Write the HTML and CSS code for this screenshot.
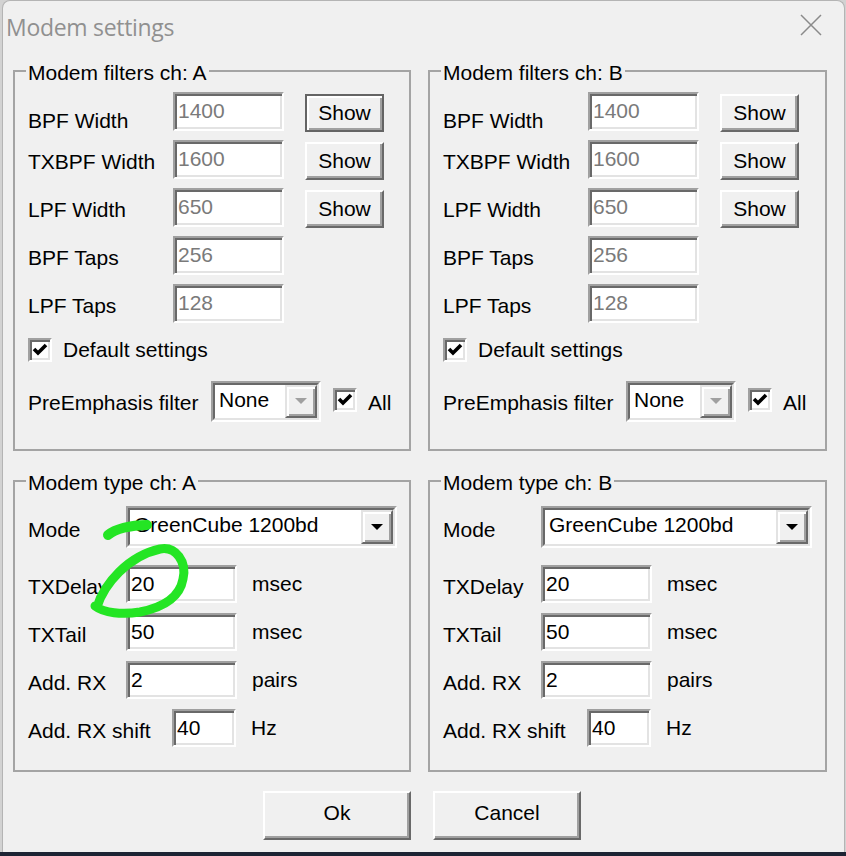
FILE: index.html
```html
<!DOCTYPE html>
<html>
<head>
<meta charset="utf-8">
<title>Modem settings</title>
<link rel="stylesheet" href="styles.css">
</head>
<body>
<div class="window">
  <div class="titlebar">
    <span class="title">Modem settings</span>
    <svg class="close" width="22" height="22" viewBox="0 0 22 22"><path d="M1 1 L21 21 M21 1 L1 21" stroke="#8a8a8a" stroke-width="1.5" fill="none"/></svg>
  </div>

  <div class="groups">
    <fieldset class="group filters">
      <legend>Modem filters ch: A</legend>
      <div class="frow"><span class="lbl w145 first">BPF Width</span><span class="edit w111 dis">1400</span><span class="btn show default">Show</span></div>
      <div class="frow"><span class="lbl w145">TXBPF Width</span><span class="edit w111 dis">1600</span><span class="btn show">Show</span></div>
      <div class="frow"><span class="lbl w145">LPF Width</span><span class="edit w111 dis">650</span><span class="btn show">Show</span></div>
      <div class="frow"><span class="lbl w145">BPF Taps</span><span class="edit w111 dis">256</span></div>
      <div class="frow"><span class="lbl w145">LPF Taps</span><span class="edit w111 dis">128</span></div>
      <div class="chkrow"><span class="chk"><svg width="20" height="20" viewBox="0 0 20 20"><polyline points="4,9 8,13 16,5" fill="none" stroke="#000" stroke-width="3.6"/></svg></span><span class="chktext">Default settings</span></div>
      <div class="prerow">
        <span class="lbl w183 pre">PreEmphasis filter</span>
        <span class="combo small"><span class="combo-in"><span class="combo-text">None</span><span class="drop"><svg width="12" height="7" viewBox="0 0 12 7"><polygon points="0,0 12,0 6,6" fill="#a0a0a0"/></svg></span></span></span>
        <span class="chk allchk"><svg width="20" height="20" viewBox="0 0 20 20"><polyline points="4,9 8,13 16,5" fill="none" stroke="#000" stroke-width="3.6"/></svg></span>
        <span class="alltext">All</span>
      </div>
    </fieldset>

    <fieldset class="group filters">
      <legend>Modem filters ch: B</legend>
      <div class="frow"><span class="lbl w145 first">BPF Width</span><span class="edit w111 dis">1400</span><span class="btn show">Show</span></div>
      <div class="frow"><span class="lbl w145">TXBPF Width</span><span class="edit w111 dis">1600</span><span class="btn show">Show</span></div>
      <div class="frow"><span class="lbl w145">LPF Width</span><span class="edit w111 dis">650</span><span class="btn show">Show</span></div>
      <div class="frow"><span class="lbl w145">BPF Taps</span><span class="edit w111 dis">256</span></div>
      <div class="frow"><span class="lbl w145">LPF Taps</span><span class="edit w111 dis">128</span></div>
      <div class="chkrow"><span class="chk"><svg width="20" height="20" viewBox="0 0 20 20"><polyline points="4,9 8,13 16,5" fill="none" stroke="#000" stroke-width="3.6"/></svg></span><span class="chktext">Default settings</span></div>
      <div class="prerow">
        <span class="lbl w183 pre">PreEmphasis filter</span>
        <span class="combo small"><span class="combo-in"><span class="combo-text">None</span><span class="drop"><svg width="12" height="7" viewBox="0 0 12 7"><polygon points="0,0 12,0 6,6" fill="#a0a0a0"/></svg></span></span></span>
        <span class="chk allchk"><svg width="20" height="20" viewBox="0 0 20 20"><polyline points="4,9 8,13 16,5" fill="none" stroke="#000" stroke-width="3.6"/></svg></span>
        <span class="alltext">All</span>
      </div>
    </fieldset>

    <fieldset class="group types">
      <legend>Modem type ch: A</legend>
      <div class="moderow">
        <span class="lbl w98 mode">Mode</span>
        <span class="combo wide"><span class="combo-in"><span class="combo-text">GreenCube 1200bd</span><span class="drop"><svg width="12" height="7" viewBox="0 0 12 7"><polygon points="0,0 12,0 6,6" fill="#000"/></svg></span></span></span>
      </div>
      <div class="trow"><span class="lbl w98">TXDelay</span><span class="edit w111">20</span><span class="unit">msec</span></div>
      <div class="trow"><span class="lbl w98">TXTail</span><span class="edit w111">50</span><span class="unit">msec</span></div>
      <div class="trow"><span class="lbl w98">Add. RX</span><span class="edit w111">2</span><span class="unit">pairs</span></div>
      <div class="trow"><span class="lbl w144">Add. RX shift</span><span class="edit w64">40</span><span class="unit">Hz</span></div>
    </fieldset>

    <fieldset class="group types">
      <legend>Modem type ch: B</legend>
      <div class="moderow">
        <span class="lbl w98 mode">Mode</span>
        <span class="combo wide"><span class="combo-in"><span class="combo-text">GreenCube 1200bd</span><span class="drop"><svg width="12" height="7" viewBox="0 0 12 7"><polygon points="0,0 12,0 6,6" fill="#000"/></svg></span></span></span>
      </div>
      <div class="trow"><span class="lbl w98">TXDelay</span><span class="edit w111">20</span><span class="unit">msec</span></div>
      <div class="trow"><span class="lbl w98">TXTail</span><span class="edit w111">50</span><span class="unit">msec</span></div>
      <div class="trow"><span class="lbl w98">Add. RX</span><span class="edit w111">2</span><span class="unit">pairs</span></div>
      <div class="trow"><span class="lbl w144">Add. RX shift</span><span class="edit w64">40</span><span class="unit">Hz</span></div>
    </fieldset>
  </div>

  <div class="buttons">
    <span class="btn pbtn">Ok</span>
    <span class="btn pbtn">Cancel</span>
  </div>

  <svg class="scribble" width="846" height="856" viewBox="0 0 846 856">
    <path d="M108 535 C 115 529, 130 525, 147 525" fill="none" stroke="#24e524" stroke-width="10" stroke-linecap="round"/>
    <path d="M97 607 C 104 584, 128 556, 160 549 C 176 546, 187 562, 183 579 C 180 596, 165 607, 140 612 C 122 615, 104 613, 95 606" fill="none" stroke="#24e524" stroke-width="9" stroke-linecap="round" stroke-linejoin="round"/>
  </svg>
</div>
</body>
</html>
```

FILE: styles.css
```css
html {
  height: 100%;
  background: linear-gradient(#d2d2d2 0, #d2d2d2 852px, #1d2434 852px);
}

body {
  margin: 0;
  font-family: "Liberation Sans", Arial, sans-serif;
  font-size: 21px;
  line-height: 24px;
  color: #000;
}

.window {
  position: relative;
  box-sizing: border-box;
  width: 843px;
  height: 852px;
  margin-left: 2px;
  background: #f0f0f0;
  border: 1px solid #b4b4b4;
  border-bottom: none;
  border-radius: 8px 8px 0 0;
}

.titlebar {
  box-sizing: border-box;
  height: 56px;
  padding: 11px 22px 0 3px;
  display: flex;
  justify-content: space-between;
  align-items: flex-start;
}

.title {
  font-family: "Open Sans", "Noto Sans", sans-serif;
  font-size: 23px;
  line-height: 30px;
  letter-spacing: -0.3px;
  color: #909090;
}

.close {
  display: block;
  margin-top: 2px;
}

.groups {
  display: grid;
  grid-template-columns: 398px 399px;
  column-gap: 17px;
  row-gap: 16px;
  padding-left: 10px;
}

.group {
  margin: 0;
  min-width: 0;
  border: 2px solid #a4a4a4;
  padding: 7px 0 27px 13px;
}

.group.types {
  padding-bottom: 23px;
}

.group legend {
  padding: 4px 2px 0;
  margin-left: -2px;
  line-height: 24px;
  background: #f0f0f0;
}

.lbl {
  display: block;
  flex: none;
  padding-top: 10px;
  white-space: nowrap;
}

.lbl.first { padding-top: 17px; }
.lbl.pre { padding-top: 10px; }
.lbl.mode { padding-top: 12px; }

.w145 { width: 145px; }
.w183 { width: 183px; }
.w98 { width: 98px; }
.w144 { width: 144px; }

.frow {
  display: flex;
  align-items: flex-start;
  height: 39px;
  margin-bottom: 9px;
}

.frow:nth-of-type(5) { margin-bottom: 0; }

.edit {
  display: block;
  flex: none;
  box-sizing: border-box;
  height: 39px;
  border: 2px solid;
  border-color: #a0a0a0 #ffffff #ffffff #a0a0a0;
  box-shadow: inset 2px 2px 0 #696969, inset -2px -2px 0 #e3e3e3;
  background: #fff;
  padding: 5px 0 0 3px;
  line-height: 24px;
  white-space: nowrap;
}

.edit.dis { color: #7a7a7a; }
.w111 { width: 111px; }
.w64 { width: 64px; }

.btn {
  display: flex;
  flex: none;
  box-sizing: border-box;
  align-items: center;
  justify-content: center;
  background: #f0f0f0;
  border: 2px solid;
  border-color: #ffffff #696969 #696969 #ffffff;
  box-shadow: inset -2px -2px 0 #a0a0a0;
}

.btn.show {
  width: 79px;
  height: 38px;
  margin-top: 2px;
  margin-left: 21px;
}

.btn.default {
  border-color: #646464;
  box-shadow: inset 2px 2px 0 #ffffff, inset -2px -2px 0 #a0a0a0;
}

.chkrow {
  display: flex;
  align-items: center;
  height: 24px;
  margin-top: 15px;
}

.chk {
  display: block;
  flex: none;
  box-sizing: border-box;
  width: 24px;
  height: 24px;
  border: 2px solid;
  border-color: #a0a0a0 #ffffff #ffffff #a0a0a0;
  box-shadow: inset 2px 2px 0 #696969, inset -2px -2px 0 #e3e3e3;
  background: #fff;
}

.chk svg { display: block; }

.chktext { margin-left: 11px; }

.prerow {
  display: flex;
  align-items: flex-start;
  margin-top: 19px;
}

.combo {
  display: block;
  flex: none;
  box-sizing: border-box;
  border: 2px solid;
  border-color: #a0a0a0 #ffffff #ffffff #a0a0a0;
}

.combo.small { width: 110px; height: 41px; }
.combo.wide { width: 271px; height: 42px; }

.combo-in {
  display: flex;
  box-sizing: border-box;
  height: 100%;
  border: 2px solid;
  border-color: #696969 #e3e3e3 #e3e3e3 #696969;
  background: #fff;
}

.combo-text {
  flex: 1;
  padding: 3px 0 0 4px;
  white-space: nowrap;
}

.drop {
  display: flex;
  flex: none;
  box-sizing: border-box;
  width: 32px;
  align-items: center;
  justify-content: center;
  background: #f0f0f0;
  border: 2px solid;
  border-color: #e3e3e3 #696969 #696969 #e3e3e3;
  box-shadow: inset 2px 2px 0 #ffffff, inset -2px -2px 0 #a0a0a0;
}

.drop svg { display: block; }

.allchk { margin: 7px 0 0 12px; }
.alltext { padding-top: 10px; margin-left: 11px; }

.moderow {
  display: flex;
  align-items: flex-start;
  margin-top: 4px;
}

.trow {
  display: flex;
  align-items: flex-start;
  height: 38px;
  margin-top: 10px;
}

.moderow + .trow { margin-top: 17px; }

.trow .edit { height: 38px; }

.unit {
  padding-top: 7px;
  margin-left: 15px;
}

.buttons {
  display: flex;
  gap: 22px;
  margin-top: 19px;
  padding-left: 260px;
}

.btn.pbtn {
  width: 148px;
  height: 49px;
  padding-bottom: 6px;
}

.scribble {
  position: absolute;
  left: -3px;
  top: -1px;
  pointer-events: none;
}
```
